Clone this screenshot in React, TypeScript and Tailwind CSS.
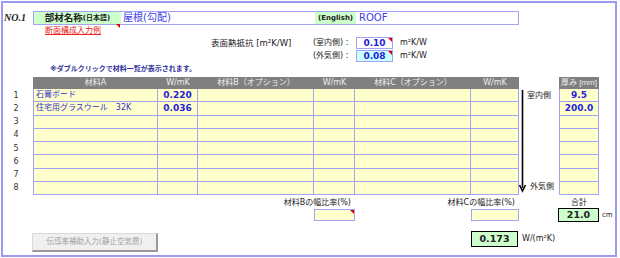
import React from "react";

const rows = [
  { a: "石膏ボード", aw: "0.220", t: "9.5" },
  { a: "住宅用グラスウール　32K", aw: "0.036", t: "200.0" },
  { a: "", aw: "", t: "" },
  { a: "", aw: "", t: "" },
  { a: "", aw: "", t: "" },
  { a: "", aw: "", t: "" },
  { a: "", aw: "", t: "" },
  { a: "", aw: "", t: "" },
];

const Corner = () => (
  <span className="absolute right-0 top-0 h-0 w-0 border-l-[4px] border-t-[4px] border-l-transparent border-t-[#e00000]" />
);

const cell = "bg-[#ffffcc] border-r border-b border-[#a3a3f5]";
const head = "bg-[#808080] text-[#eeeeee] text-[8px] flex items-center justify-center leading-none whitespace-nowrap";
const val = "font-bold text-[9px] text-[#2323d8] flex items-center justify-center leading-none";

export default function App() {
  return (
    <div className="w-[620px] h-[258px] bg-white p-[1px] font-['DejaVu_Sans','Noto_Sans_CJK_JP',sans-serif] text-[#222]">
      <div className="h-[256px] w-[616px] border-2 border-[#9a9af0]">
        {/* name row */}
        <div className="mt-[8px] flex h-[14px] items-center">
          <div className="w-[30px] pl-[1px] font-['Liberation_Serif',serif] text-[10px] font-bold italic leading-none">
            NO.1
          </div>
          <div className="flex h-[14px] w-[486px] items-stretch border border-[#a3a3f5]">
            <div className="flex w-[87px] items-center justify-center bg-[#ccffcc] font-bold leading-none">
              <span className="text-[9.5px]">部材名称</span>
              <span className="text-[7px]">(日本語)</span>
            </div>
            <div className="flex w-[194px] items-center pl-[2px] text-[10px] leading-none text-[#3d3de8]">屋根(勾配)</div>
            <div className="flex w-[41px] items-center justify-center bg-[#ccffcc] text-[7px] font-bold leading-none">
              (English)
            </div>
            <div className="flex items-center pl-[3px] text-[10px] leading-none text-[#3d3de8]">ROOF</div>
          </div>
        </div>

        <div className="relative flex h-[12px] items-center pl-[42px]">
          <span className="text-[8px] leading-none text-[#ee2222] underline">断面構成入力例</span>
          <span className="absolute left-[113px] top-[-1px] h-0 w-0 border-l-[4px] border-t-[4px] border-l-transparent border-t-[#e00000]" />
        </div>

        {/* surface resistance */}
        <div className="flex h-[13px] items-start">
          <div className="w-[208px]" />
          <div className="flex h-[12px] w-[102px] items-center text-[8.5px] leading-none">表面熱抵抗 [m²K/W]</div>
          <div className="flex h-[12px] w-[43px] items-center text-[8px] leading-none">(室内側) :</div>
          <div className={`relative h-[12px] w-[37px] border border-[#a3a3f5] bg-white ${val}`}>
            0.10
            <Corner />
          </div>
          <div className="ml-[7px] flex h-[12px] items-center text-[8px] leading-none">m²K/W</div>
        </div>
        <div className="flex h-[13px] items-start">
          <div className="w-[310px]" />
          <div className="flex h-[12px] w-[43px] items-center text-[8px] leading-none">(外気側) :</div>
          <div className={`relative h-[12px] w-[37px] border border-[#a3a3f5] bg-[#ccffff] ${val}`}>
            0.08
            <Corner />
          </div>
          <div className="ml-[7px] flex h-[12px] items-center text-[8px] leading-none">m²K/W</div>
        </div>

        <div className="flex h-[13px] items-center pl-[47px] text-[7px] font-bold leading-none text-[#33339a]">
          ※ダブルクリックで材料一覧が表示されます。
        </div>

        {/* table */}
        <div className="mt-[1px] grid grid-cols-[30px_125px_40px_116px_41px_116px_48px_40px_40px_1fr] grid-rows-[12px_repeat(8,13.25px)_13px_14px_9px_21px]">
          <div />
          <div className={head}>材料A</div>
          <div className={head}>W/mK</div>
          <div className={head}>材料B（オプション）</div>
          <div className={head}>W/mK</div>
          <div className={head}>材料C（オプション）</div>
          <div className={head}>W/mK</div>
          <div />
          <div className={`${head} font-['Liberation_Sans','Noto_Sans_CJK_JP',sans-serif] text-[7.5px]`}>厚み [mm]</div>
          <div />

          <div className="col-start-8 row-span-8 row-start-2 flex">
            <svg width="8" height="106" viewBox="0 0 8 106" className="shrink-0">
              <line x1="3.5" y1="1" x2="3.5" y2="99" stroke="#000" strokeWidth="1.6" />
              <path d="M0.5 96 L3.5 102 L6.5 96" fill="none" stroke="#000" strokeWidth="1.6" />
            </svg>
            <div className="flex flex-col justify-between pb-[4px] pt-[3px] text-[8px] leading-none">
              <span>室内側</span>
              <span className="ml-[3px]">外気側</span>
            </div>
          </div>

          {rows.map((r, i) => (
            <React.Fragment key={i}>
              <div className="flex items-center justify-center pr-[4px] text-[8px] leading-none text-[#333]">{i + 1}</div>
              <div className={`${cell} flex items-center border-l pl-[2px] text-[8px] leading-none text-[#3333cc]`}>{r.a}</div>
              <div className={`${cell} ${val}`}>{r.aw}</div>
              <div className={cell} />
              <div className={cell} />
              <div className={cell} />
              <div className={cell} />
              <div className={`${cell} border-l ${val}`}>{r.t}</div>
              <div />
            </React.Fragment>
          ))}

          <div className="col-span-2 col-start-4 row-start-10 flex items-center justify-end pr-[4px] pt-[3px] text-[8px] leading-none">
            材料Bの幅比率(%)
          </div>
          <div className="col-span-2 col-start-6 row-start-10 flex items-center justify-end pr-[4px] pt-[3px] text-[8px] leading-none">
            材料Cの幅比率(%)
          </div>
          <div className="col-start-9 row-start-10 flex items-center justify-center pt-[3px] text-[8px] leading-none">合計</div>

          <div className="relative col-start-5 row-start-11 mt-[1px] h-[12px] border border-[#a3a3f5] bg-[#ffffcc]">
            <Corner />
          </div>
          <div className="col-start-7 row-start-11 mt-[1px] h-[12px] border border-[#a3a3f5] bg-[#ffffcc]" />
          <div className="col-start-9 row-start-11 -ml-[1px] flex h-[14px] items-center justify-center border-[1.5px] border-black bg-[#ccffcc] text-[9.5px] font-bold leading-none">
            21.0
          </div>
          <div className="col-start-10 row-start-11 flex items-center whitespace-nowrap pl-[3px] text-[7px] leading-none">cm</div>

          <div className="col-start-2 row-start-13 -ml-[1px] mt-[2px] flex h-[19px] items-center justify-center border border-b-2 border-r-2 border-[#d8d8d8] border-b-[#9a9a9a] border-r-[#9a9a9a] bg-[#f0f0f0] text-[7.5px] leading-none text-[#a0a0a0]">
            伝導率補助入力(静止空気層)
          </div>
          <div className="col-start-7 row-start-13 flex h-[16px] w-[47px] items-center justify-center border-[1.5px] border-black bg-[#ccffcc] text-[9.5px] font-bold leading-none">
            0.173
          </div>
          <div className="col-span-3 col-start-8 row-start-13 flex h-[16px] items-center pl-[3px] text-[8px] leading-none">W/(m²K)</div>
        </div>
      </div>
    </div>
  );
}
